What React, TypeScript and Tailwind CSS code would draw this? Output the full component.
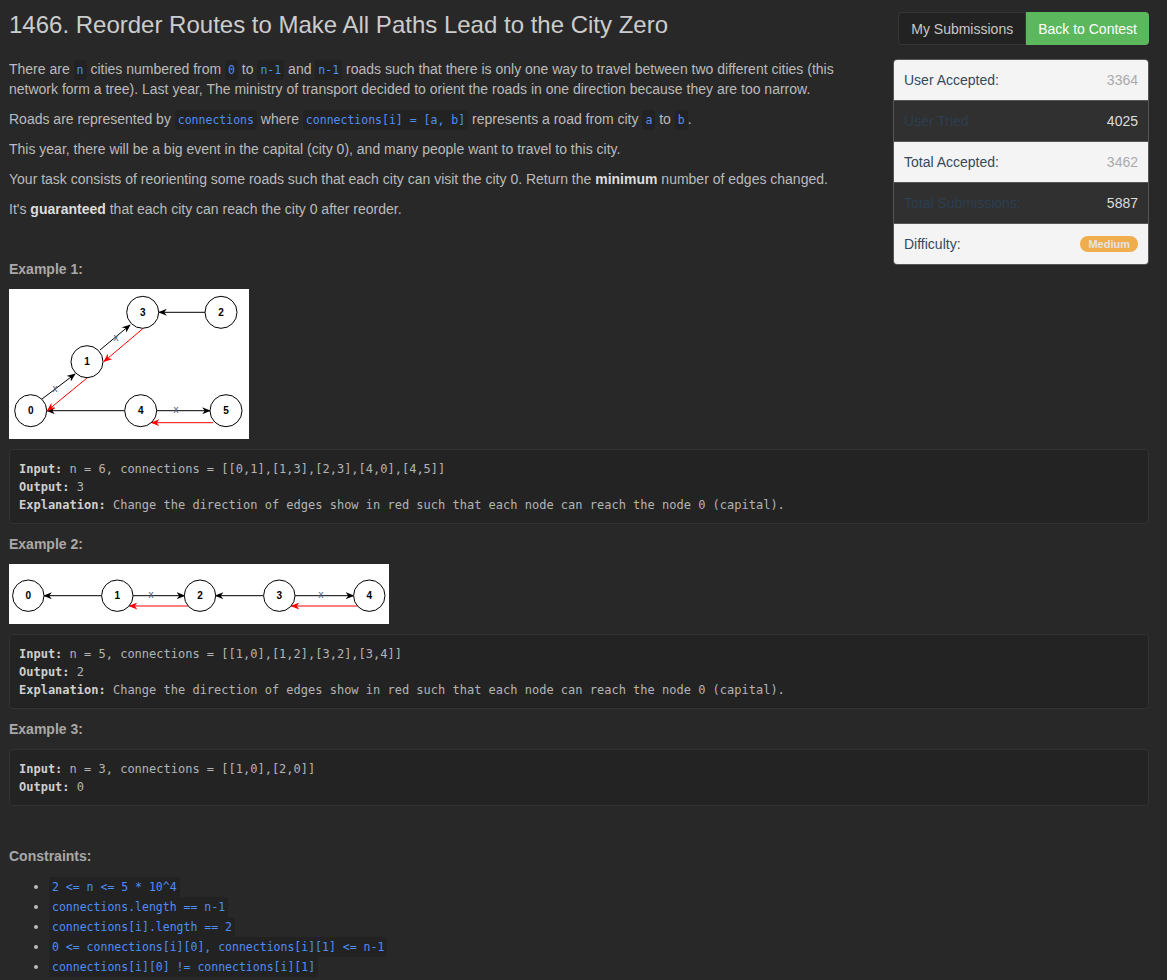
import React from "react";

const sans = { fontFamily: '"Liberation Sans", Arial, sans-serif' };

const Code = ({ children }: { children: React.ReactNode }) => (
    <code className="rounded-[3px] bg-[#222] px-[3px] py-[3px] font-['DejaVu_Sans_Mono',monospace] text-[11.5px] leading-[1] text-[#4e8ef7]">
        {children}
    </code>
);

const stats = [
    { label: "User Accepted:", value: "3364", light: true },
    { label: "User Tried:", value: "4025", light: false },
    { label: "Total Accepted:", value: "3462", light: true },
    { label: "Total Submissions:", value: "5887", light: false },
];

const Node = ({ x, y, label, r = 16 }: { x: number; y: number; label: string; r?: number }) => (
    <g>
        <circle cx={x} cy={y} r={r} fill="#fff" stroke="#000" strokeWidth="1" />
        <text x={x} y={y + 3.5} textAnchor="middle" fontSize="10" fontWeight="bold" fontFamily="Liberation Sans, Arial, sans-serif" fill="#000">
            {label}
        </text>
    </g>
);

const Markers = ({ id }: { id: string }) => (
    <defs>
        <marker id={`${id}-b`} viewBox="0 0 10 8" refX="9" refY="4" markerWidth="9" markerHeight="7" orient="auto" markerUnits="userSpaceOnUse">
            <path d="M0,0 L10,4 L0,8 L3,4 z" fill="#000" />
        </marker>
        <marker id={`${id}-r`} viewBox="0 0 10 8" refX="9" refY="4" markerWidth="9" markerHeight="7" orient="auto" markerUnits="userSpaceOnUse">
            <path d="M0,0 L10,4 L0,8 L3,4 z" fill="#f00" />
        </marker>
    </defs>
);

const Cross = ({ x, y }: { x: number; y: number }) => (
    <text x={x} y={y + 3.5} textAnchor="middle" fontSize="10" fontFamily="Liberation Sans, Arial, sans-serif" fill="#4a5878">
        x
    </text>
);

const Graph1 = () => (
    <svg width="240" height="150" viewBox="0 0 240 150" className="mb-[10px] block bg-white">
        <Markers id="g1" />
        {/* black edges */}
        <line x1="196" y1="23.3" x2="150" y2="23.3" stroke="#000" markerEnd="url(#g1-b)" />
        <line x1="91" y1="61" x2="121" y2="36" stroke="#000" markerEnd="url(#g1-b)" />
        <line x1="33" y1="110" x2="66" y2="85" stroke="#000" markerEnd="url(#g1-b)" />
        <line x1="115.7" y1="121.7" x2="38" y2="121.7" stroke="#000" markerEnd="url(#g1-b)" />
        <line x1="147.7" y1="121.7" x2="201" y2="121.7" stroke="#000" markerEnd="url(#g1-b)" />
        {/* red edges */}
        <line x1="134" y1="39.5" x2="95" y2="72.5" stroke="#f00" markerEnd="url(#g1-r)" />
        <line x1="78" y1="89" x2="38.5" y2="121.5" stroke="#f00" markerEnd="url(#g1-r)" />
        <line x1="204" y1="133.7" x2="142.5" y2="133.7" stroke="#f00" markerEnd="url(#g1-r)" />
        <Cross x={107} y={48} />
        <Cross x={46} y={99} />
        <Cross x={167} y={120} />
        <Node x={133.7} y={23.3} label="3" />
        <Node x={212} y={23.3} label="2" />
        <Node x={78} y={72.7} label="1" />
        <Node x={21.7} y={121.7} label="0" />
        <Node x={131.7} y={121.7} label="4" />
        <Node x={217} y={121.7} label="5" />
    </svg>
);

const Graph2 = () => (
    <svg width="380" height="60" viewBox="0 0 380 60" className="mb-[10px] block bg-white">
        <Markers id="g2" />
        <line x1="92.5" y1="31.7" x2="35" y2="31.7" stroke="#000" markerEnd="url(#g2-b)" />
        <line x1="124" y1="31.7" x2="175.5" y2="31.7" stroke="#000" markerEnd="url(#g2-b)" />
        <line x1="254.5" y1="31.7" x2="206.5" y2="31.7" stroke="#000" markerEnd="url(#g2-b)" />
        <line x1="286" y1="31.7" x2="344.5" y2="31.7" stroke="#000" markerEnd="url(#g2-b)" />
        <line x1="179" y1="42" x2="120.5" y2="42" stroke="#f00" markerEnd="url(#g2-r)" />
        <line x1="348.5" y1="42" x2="282.5" y2="42" stroke="#f00" markerEnd="url(#g2-r)" />
        <Cross x={142} y={30} />
        <Cross x={312} y={30} />
        <Node x={19.3} y={31.7} r={15.7} label="0" />
        <Node x={108.3} y={31.7} r={15.7} label="1" />
        <Node x={191} y={31.7} r={15.7} label="2" />
        <Node x={270.3} y={31.7} r={15.7} label="3" />
        <Node x={360.3} y={31.7} r={15.7} label="4" />
    </svg>
);

const Pre = ({ lines }: { lines: [string, string][] }) => (
    <pre className="mb-[10px] rounded-[4px] border border-[#333] bg-[#232323] px-[9px] pt-[10px] pb-[9px] font-['DejaVu_Sans_Mono',monospace] text-[12px] leading-[18px] text-[#b4b4b4]">
        {lines.map(([label, rest]) => (
            <div key={label}>
                <strong className="font-bold text-[#cfcfcf]">{label}</strong> {rest}
            </div>
        ))}
    </pre>
);

export default function App() {
    return (
        <div className="min-h-[980px] bg-[#282828] pl-[9px] pr-[18px] text-[14px] leading-[20px] text-[#bbb]" style={sans}>
            <div className="flex items-start justify-between pt-3 mb-[14px]">
                <h3 className="text-[24px] leading-[26px] font-normal text-[#cccccc]">
                    1466. Reorder Routes to Make All Paths Lead to the City Zero
                </h3>
                <div className="flex h-[33px]">
                    <button className="rounded-l-[4px] border border-[#353535] bg-[#222] px-3 text-[14px] text-[#c8c8c8]">My Submissions</button>
                    <button className="rounded-r-[4px] bg-[#5cb85c] px-3 text-[14px] text-white">Back to Contest</button>
                </div>
            </div>

            <div className="float-right ml-5 mb-4 w-[256px] overflow-hidden rounded-[4px] border border-[#555]">
                {stats.map((s, i) => (
                    <div
                        key={s.label}
                        className={`flex items-center justify-between px-[10px] ${i > 0 ? "h-[41px] border-t border-[#555]" : "h-[40px]"} ${s.light ? "bg-[#f4f4f4]" : "bg-[#303030]"}`}
                    >
                        <span className={s.light ? "text-[#34495e]" : "text-[#2c3e50]"}>{s.label}</span>
                        <span className={s.light ? "text-[#aaa]" : "text-[#ddd]"}>{s.value}</span>
                    </div>
                ))}
                <div className="flex h-[41px] items-center justify-between border-t border-[#555] bg-[#f4f4f4] px-[10px]">
                    <span className="text-[#34495e]">Difficulty:</span>
                    <span className="rounded-full bg-[#f0ad4e] px-[8px] text-[11px] leading-[16px] font-bold text-[#e4e4e4]">Medium</span>
                </div>
            </div>

            <p className="mb-[10px]">
                There are <Code>n</Code> cities numbered from <Code>0</Code> to <Code>n-1</Code> and <Code>n-1</Code> roads such that there is only one way to travel between two different cities (this network form a tree). Last year, The ministry of transport decided to orient the roads in one direction because they are too narrow.
            </p>
            <p className="mb-[10px]">
                Roads are represented by <Code>connections</Code> where <Code>connections[i] = [a, b]</Code> represents a road from city <Code>a</Code> to <Code>b</Code>.
            </p>
            <p className="mb-[10px]">This year, there will be a big event in the capital (city 0), and many people want to travel to this city.</p>
            <p className="mb-[10px]">
                Your task consists of reorienting some roads such that each city can visit the city 0. Return the <strong className="text-[#ddd]">minimum</strong> number of edges changed.
            </p>
            <p className="mb-[10px]">
                It's <strong className="text-[#ddd]">guaranteed</strong> that each city can reach the city 0 after reorder.
            </p>
            <p className="mb-[10px]">&nbsp;</p>

            <p className="mb-[10px] font-bold text-[#a8a8a8]">Example 1:</p>
            <Graph1 />
            <Pre
                lines={[
                    ["Input:", "n = 6, connections = [[0,1],[1,3],[2,3],[4,0],[4,5]]"],
                    ["Output:", "3"],
                    ["Explanation:", "Change the direction of edges show in red such that each node can reach the node 0 (capital)."],
                ]}
            />

            <p className="mb-[10px] font-bold text-[#a8a8a8]">Example 2:</p>
            <Graph2 />
            <Pre
                lines={[
                    ["Input:", "n = 5, connections = [[1,0],[1,2],[3,2],[3,4]]"],
                    ["Output:", "2"],
                    ["Explanation:", "Change the direction of edges show in red such that each node can reach the node 0 (capital)."],
                ]}
            />

            <p className="mb-[10px] font-bold text-[#a8a8a8]">Example 3:</p>
            <Pre
                lines={[
                    ["Input:", "n = 3, connections = [[1,0],[2,0]]"],
                    ["Output:", "0"],
                ]}
            />

            <p className="mb-[10px]">&nbsp;</p>
            <p className="mb-[10px] font-bold text-[#a8a8a8]">Constraints:</p>
            <ul className="list-disc pl-[40px] marker:text-[#bbb]">
                <li><Code>2 &lt;= n &lt;= 5 * 10^4</Code></li>
                <li><Code>connections.length == n-1</Code></li>
                <li><Code>connections[i].length == 2</Code></li>
                <li><Code>0 &lt;= connections[i][0], connections[i][1] &lt;= n-1</Code></li>
                <li><Code>connections[i][0] != connections[i][1]</Code></li>
            </ul>
        </div>
    );
}
